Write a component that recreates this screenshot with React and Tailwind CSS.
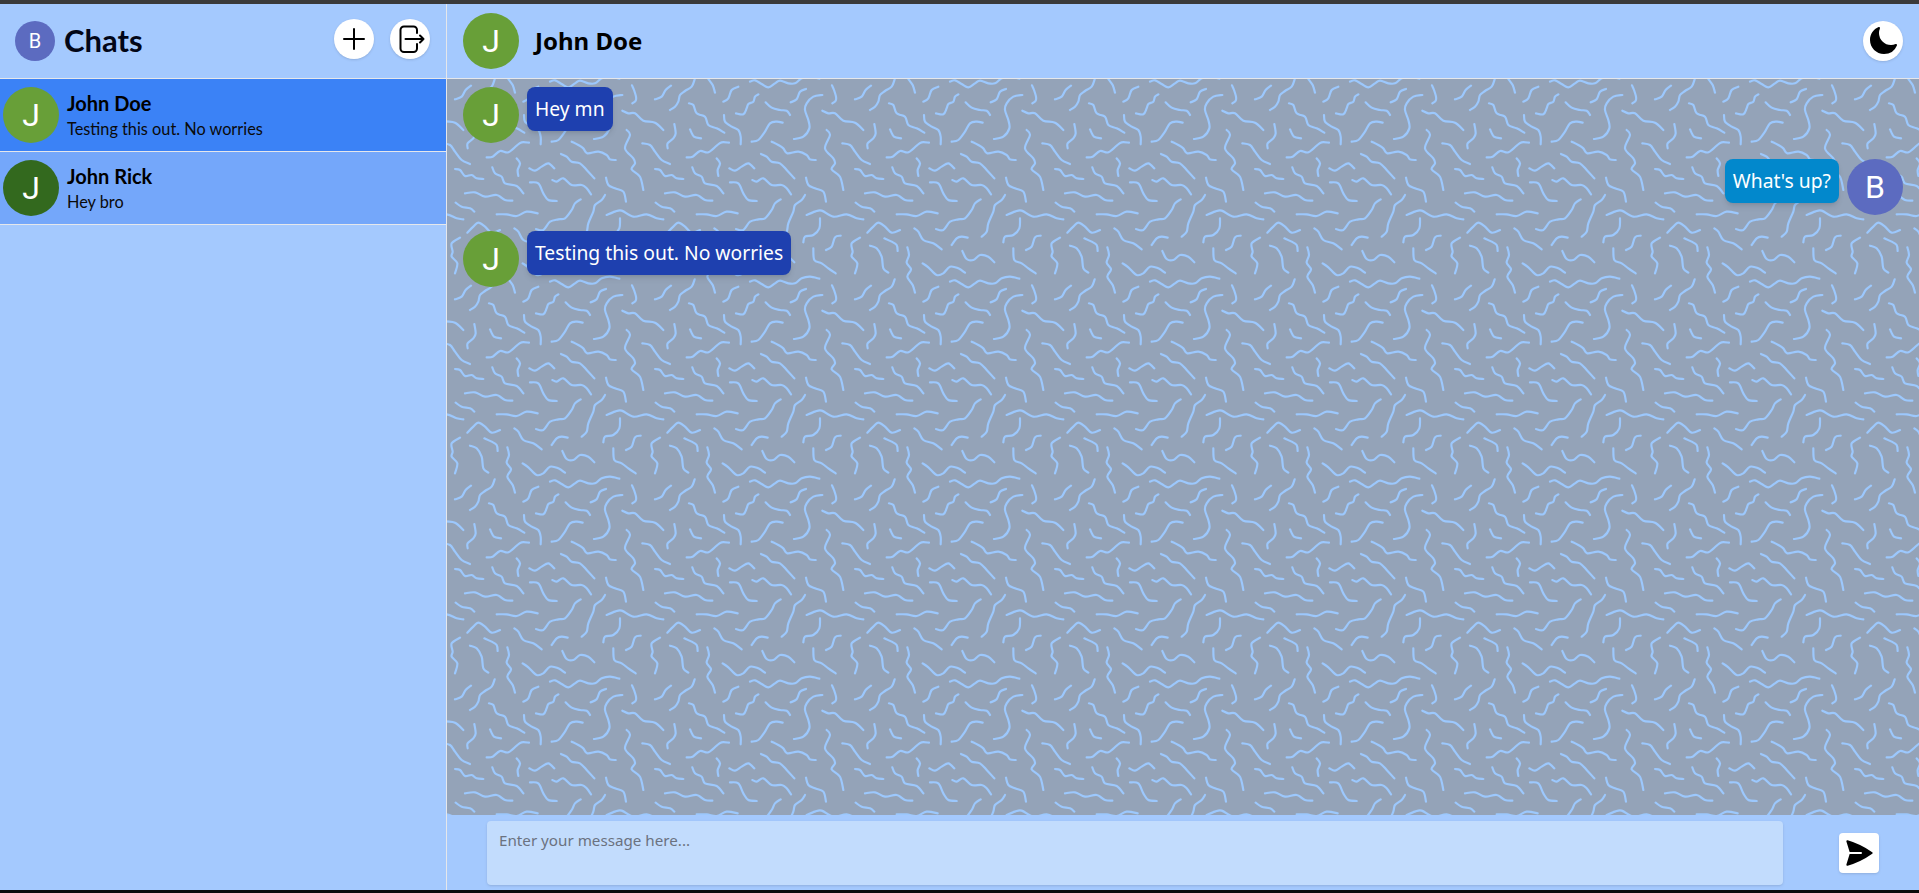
import React from 'react';

// squiggles of the wallpaper, traced in 600x600 units (one tile is 200px)
const SQUIGGLES = [
  [[150,605],[165,601],[185,612],[205,622],[225,610],[240,602],[265,610],[285,610],[305,595],[330,590],[358,596]],
  [[396,16],[402,30],[408,50],[407,62],[397,70]],
  [[465,58],[485,50],[497,30],[513,17]],
  [[510,90],[525,80],[535,65],[540,45],[555,33],[575,20],[584,-2]],
  [[22,502],[27,525],[20,548],[33,568],[22,590],[38,615],[45,638]],
  [[70,65],[85,55],[95,30],[115,20]],
  [[108,100],[130,103],[140,85],[145,72],[160,65],[165,50],[175,43]],
  [[197,67],[215,83],[240,90],[260,92],[270,105]],
  [[272,67],[290,58],[300,35],[318,27]],
  [[367,45],[340,50],[320,70],[315,90],[325,120],[328,145],[310,170],[282,177]],
  [[367,92],[385,100],[405,100],[430,122],[465,128],[490,150]],
  [[380,150],[390,165],[375,205],[400,235],[405,250],[395,268],[420,290],[430,330]],
  [[523,132],[527,160],[520,175],[503,190],[503,205]],
  [[567,70],[580,75],[590,100],[615,110],[625,135],[650,145],[673,158]],
  [[570,148],[582,170],[603,175]],
  [[72,105],[75,125],[95,140],[115,150],[122,170],[122,193]],
  [[155,185],[175,180],[195,155],[210,130],[230,125],[248,128]],
  [[560,232],[578,230],[600,213],[625,217],[650,197],[665,187],[687,188]],
  [[215,185],[235,195],[250,205],[262,220],[295,215],[320,225],[330,238],[347,240]],
  [[183,222],[200,230],[215,245],[240,250],[262,272],[283,295]],
  [[50,235],[60,250],[53,270],[55,288]],
  [[88,265],[105,272],[125,260],[145,250],[163,265]],
  [[427,190],[450,195],[465,215],[485,240],[510,252]],
  [[465,267],[480,270],[495,288],[515,285],[530,295],[550,297]],
  [[577,262],[585,280],[605,290],[615,310],[650,318],[670,340]],
  [[90,307],[115,310],[130,340],[145,360],[170,363]],
  [[157,300],[170,305],[190,295],[215,315],[245,315],[260,325],[273,343]],
  [[318,293],[325,315],[345,325],[370,335],[378,365]],
  [[495,340],[525,337],[555,350],[590,345],[615,360],[637,362]],
  [[467,368],[485,380],[510,385],[523,395]],
  [[-10,403],[20,403],[50,408],[80,395],[113,400]],
  [[108,447],[130,450],[150,425],[175,418],[195,415],[215,390],[225,370],[242,358]],
  [[245,470],[260,455],[265,430],[280,395],[285,375],[305,360],[315,345]],
  [[320,405],[345,395],[365,392],[400,410],[440,403],[470,415],[490,418]],
  [[360,415],[358,445],[340,465],[315,470],[310,487]],
  [[502,458],[520,440],[535,428],[555,440],[575,458],[600,450]],
  [[43,445],[55,455],[70,480],[100,490],[125,508]],
  [[155,495],[170,475],[185,470],[203,473]],
  [[378,510],[395,500],[405,472],[422,467]],
  [[480,473],[455,490],[458,515],[455,530],[472,550],[465,580]],
  [[510,497],[530,505],[545,530],[550,565],[565,578]],
  [[553,475],[575,485],[590,495],[593,513]],
  [[187,513],[200,537],[220,540],[240,525],[265,530],[283,547]],
  [[340,505],[343,540],[365,550],[385,565],[407,580]],
  [[68,550],[85,562],[110,585],[130,580],[150,560],[175,565],[195,578]],
];

// catmull-rom through the traced points
const smooth = (pts) => {
  let d = `M${pts[0][0]} ${pts[0][1]}`;
  for (let i = 0; i < pts.length - 1; i++) {
    const p0 = pts[i - 1] || pts[i];
    const p1 = pts[i];
    const p2 = pts[i + 1];
    const p3 = pts[i + 2] || p2;
    const c1x = p1[0] + (p2[0] - p0[0]) / 6;
    const c1y = p1[1] + (p2[1] - p0[1]) / 6;
    const c2x = p2[0] - (p3[0] - p1[0]) / 6;
    const c2y = p2[1] - (p3[1] - p1[1]) / 6;
    d += `C${c1x} ${c1y} ${c2x} ${c2y} ${p2[0]} ${p2[1]}`;
  }
  return d;
};

const SQUIGGLE_PATH = SQUIGGLES.map(smooth).join('');
const OFFSETS = [-600, 0, 600];

const Wallpaper = () => (
  <svg className="absolute inset-0 w-full h-full" aria-hidden="true">
    <defs>
      <pattern id="squiggles" width="200" height="200" patternUnits="userSpaceOnUse" patternTransform="translate(53 1)">
        <g transform="scale(0.33333)" fill="none" stroke="#9cc8fd" strokeWidth="6.5" strokeLinecap="round" strokeLinejoin="round">
          {OFFSETS.map((ox) =>
            OFFSETS.map((oy) => <path key={`${ox}-${oy}`} d={SQUIGGLE_PATH} transform={`translate(${ox} ${oy})`} />)
          )}
        </g>
      </pattern>
    </defs>
    <rect width="100%" height="100%" fill="url(#squiggles)" />
  </svg>
);

const Avatar = ({ letter, color }) => (
  <div className={`w-14 h-14 rounded-full shrink-0 flex items-center justify-center text-white text-[32px] font-['Roboto',sans-serif] ${color}`}>
    {letter}
  </div>
);

const RoundButton = ({ children }) => (
  <button className="w-10 h-10 rounded-full bg-white shadow-sm flex items-center justify-center text-black">
    {children}
  </button>
);

const ChatRow = ({ name, text, color, rowBg, letter }) => (
  <div className={`h-[73px] border-b border-[#e5e7eb] flex items-center pl-[3px] gap-2 ${rowBg}`}>
    <Avatar letter={letter} color={color} />
    <div className="flex flex-col">
      <span className="text-[20px] leading-7 font-bold text-black -mt-px">{name}</span>
      <span className="text-[16.3px] leading-6 text-[#0a0a0a]">{text}</span>
    </div>
  </div>
);

const Message = ({ text, mine }) => (
  <div className={`flex gap-2 ${mine ? 'flex-row-reverse' : ''}`}>
    <Avatar letter={mine ? 'B' : 'J'} color={mine ? 'bg-[#5c6bc0]' : 'bg-[#689f38]'} />
    <div className={`h-11 px-2 rounded-lg shadow-md text-white text-[19.3px] leading-[44px] ${mine ? 'bg-[#0288cc]' : 'bg-[#1e40af]'}`}>
      {text}
    </div>
  </div>
);

export default function App() {
  return (
    <div className="h-screen w-full flex flex-col bg-[#a4c9fe] overflow-hidden">
      <div className="h-1 bg-[#3a3a3a] shrink-0" />

      <div className="flex-1 flex min-h-0">
        {/* Sidebar */}
        <aside className="w-[447px] shrink-0 border-r border-[#e5e7eb] flex flex-col font-['Lato',sans-serif]">
          <header className="h-[75px] shrink-0 border-b border-[#e5e7eb] flex items-center pl-[15px] pr-4">
            <div className="w-10 h-10 rounded-full bg-[#5c6bc0] text-white text-xl flex items-center justify-center font-['Roboto',sans-serif]">
              B
            </div>
            <h1 className="ml-[9px] text-[31px] font-bold text-[#020617] flex-1 -mt-[2px]">Chats</h1>
            <div className="flex gap-4 -mt-1">
              <RoundButton>
                <svg className="w-8 h-8" fill="none" stroke="currentColor" strokeWidth="1.5" viewBox="0 0 24 24">
                  <path strokeLinecap="round" strokeLinejoin="round" d="M12 4.5v15m7.5-7.5h-15" />
                </svg>
              </RoundButton>
              <RoundButton>
                <svg className="w-10 h-10" fill="none" stroke="currentColor" strokeWidth="2" viewBox="0 0 40 40">
                  <path strokeLinecap="round" strokeLinejoin="round" d="M27 14v-3a3.500 3.500 0 0 0-3.500-3.500h-9.500a3.500 3.500 0 0 0-3.500 3.500v18.500a3.500 3.500 0 0 0 3.500 3.500h9.500a3.500 3.500 0 0 0 3.500-3.500v-4.500M15.500 20h18M30 16.500l3.500 3.500-3.500 3.500" />
                </svg>
              </RoundButton>
            </div>
          </header>
          <ChatRow name="John Doe" text="Testing this out. No worries" letter="J" color="bg-[#689f38]" rowBg="bg-[#3b82f6]" />
          <ChatRow name="John Rick" text="Hey bro" letter="J" color="bg-[#33691e]" rowBg="bg-[#74a7fa]" />
        </aside>

        {/* Conversation */}
        <main className="flex-1 min-w-0 flex flex-col font-['Noto_Sans',sans-serif]">
          <header className="h-[75px] shrink-0 border-b border-[#e5e7eb] flex items-center pl-4 pr-4">
            <Avatar letter="J" color="bg-[#689f38]" />
            <span className="ml-4 text-[24px] font-bold text-black flex-1">John Doe</span>
            <RoundButton>
              <svg className="w-8 h-8" fill="currentColor" viewBox="0 0 24 24">
                <path fillRule="evenodd" clipRule="evenodd" d="M9.528 1.718a.75.75 0 01.162.819A8.97 8.97 0 009 6a9 9 0 009 9 8.97 8.97 0 003.463-.69.75.75 0 01.981.98 10.503 10.503 0 01-9.694 6.46c-5.799 0-10.5-4.701-10.5-10.5 0-4.368 2.667-8.112 6.46-9.694a.75.75 0 01.818.162z" />
              </svg>
            </RoundButton>
          </header>

          <section className="relative flex-1 min-h-0 overflow-hidden bg-[#94a3b8]">
            <Wallpaper />
            <div className="relative flex flex-col gap-4 pt-2 px-4">
              <Message text="Hey mn" />
              <Message text="What's up?" mine />
              <Message text="Testing this out. No worries" />
            </div>
          </section>

          <footer className="h-[75px] shrink-0 flex items-center pl-10 pr-10 gap-14">
            <div className="flex-1 h-16 rounded bg-[#c2dcfd] px-3 py-[9px] text-[15.2px] leading-5 text-[#6b7280] shadow-sm">
              Enter your message here...
            </div>
            <button className="w-10 h-10 rounded bg-white shadow-sm flex items-center justify-center text-black">
              <svg className="w-8 h-8" fill="currentColor" viewBox="0 0 24 24">
                <path d="M3.478 2.404a.75.75 0 00-.926.941l2.432 7.905H13.5a.75.75 0 010 1.5H4.984l-2.432 7.905a.75.75 0 00.926.94 60.519 60.519 0 0018.445-8.986.75.75 0 000-1.218A60.517 60.517 0 003.478 2.404z" />
              </svg>
            </button>
          </footer>
        </main>
      </div>

      <div className="h-[3px] bg-[#0a0a0a] shrink-0" />
    </div>
  );
}
